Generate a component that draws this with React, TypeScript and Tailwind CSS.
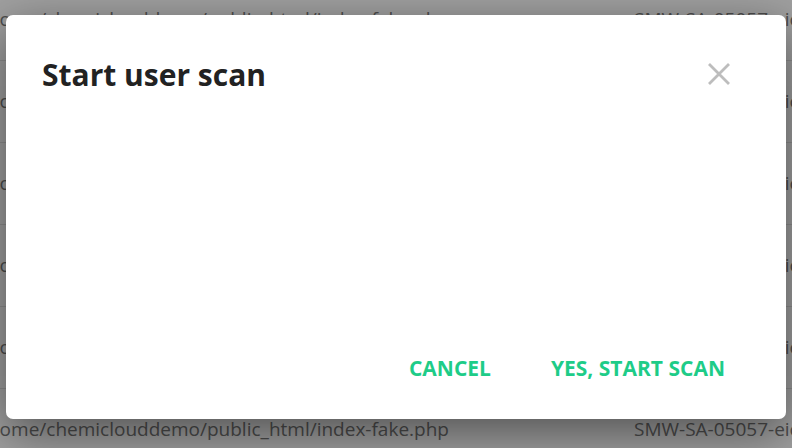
import React from 'react';

const ROWS = Array.from({ length: 6 });

const BackgroundTable: React.FC = () => (
  <div className="mt-[-21px]">
    {ROWS.map((_, i) => (
      <div key={i} className="flex h-[82px] items-center border-b border-[#e3e3e3] text-[19px] text-[#7a7a7a]">
        <div className="w-[634px] shrink-0 overflow-hidden whitespace-nowrap">
          <span className="ml-[-19px]">/home/chemiclouddemo/public_html/index-fake.php</span>
        </div>
        <div className="whitespace-nowrap">SMW-SA-05057-eicar</div>
      </div>
    ))}
  </div>
);

const CloseIcon: React.FC = () => (
  <svg width="24" height="24" viewBox="0 0 24 24" fill="none" stroke="#bdbdbd" strokeWidth="2.8" strokeLinecap="butt">
    <path d="M2 2 L22 22 M22 2 L2 22" />
  </svg>
);

export default function App() {
  return (
    <div className="relative h-[448px] w-[792px] overflow-hidden bg-white font-['Open_Sans',sans-serif]">
      <BackgroundTable />
      <div className="absolute inset-0 bg-black/[0.37] pl-[6px] pr-[6px] pt-[15px]">
        <div className="flex h-[404px] w-[780px] flex-col rounded-[7px] bg-white shadow-[0_14px_50px_rgba(0,0,0,0.5)]">
          <div className="flex items-start justify-between pl-[36px] pr-[55px] pt-[40px]">
            <h2 className="text-[30px] font-bold leading-[40px] text-[#222]">Start user scan</h2>
            <button className="mt-[7px]" aria-label="Close">
              <CloseIcon />
            </button>
          </div>
          <div className="flex-1" />
          <div className="flex justify-end pb-[33px] pr-[31px]">
            <button className="px-[30px] py-[4px] text-[21px] font-bold leading-[28px] text-[#1ecc88]">CANCEL</button>
            <button className="px-[30px] py-[4px] text-[21px] font-bold leading-[28px] text-[#1ecc88]">YES, START SCAN</button>
          </div>
        </div>
      </div>
    </div>
  );
}
